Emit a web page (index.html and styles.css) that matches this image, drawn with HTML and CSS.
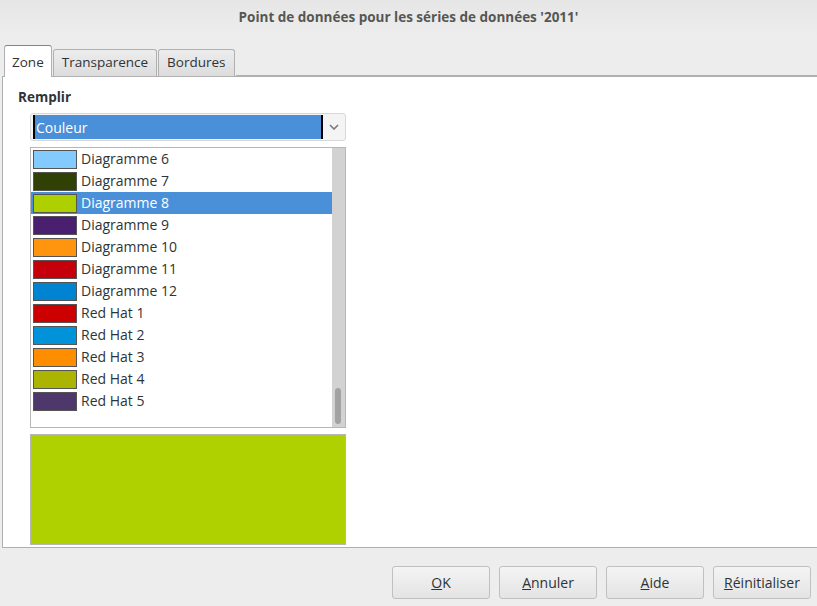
FILE: index.html
```html
<!DOCTYPE html>
<html lang="fr">
<head>
<meta charset="utf-8">
<link rel="stylesheet" href="styles.css">
</head>
<body>
<div class="window">
  <header class="titlebar">Point de données pour les séries de données '2011'</header>
  <nav class="tabs">
    <div class="tab active">Zone</div>
    <div class="tab">Transparence</div>
    <div class="tab">Bordures</div>
    <div class="tab-fill"></div>
  </nav>
  <main class="panel">
    <div class="label">Remplir</div>
    <div class="indent">
      <div class="combo">
        <div class="combo-value"><span class="caret"></span>Couleur</div>
        <div class="combo-btn">
          <svg width="10" height="6" viewBox="0 0 10 6"><path d="M1 1 L5 5 L9 1" fill="none" stroke="#7a7a7a" stroke-width="1.6"/></svg>
        </div>
      </div>
      <div class="list">
        <div class="rows">
          <div class="row"><span class="sw" style="background:#83caff"></span>Diagramme 6</div>
          <div class="row"><span class="sw" style="background:#314004"></span>Diagramme 7</div>
          <div class="row sel"><span class="sw" style="background:#aecf00"></span>Diagramme 8</div>
          <div class="row"><span class="sw" style="background:#4b1f6f"></span>Diagramme 9</div>
          <div class="row"><span class="sw" style="background:#ff950e"></span>Diagramme 10</div>
          <div class="row"><span class="sw" style="background:#c5000b"></span>Diagramme 11</div>
          <div class="row"><span class="sw" style="background:#0084d1"></span>Diagramme 12</div>
          <div class="row"><span class="sw" style="background:#cc0000"></span>Red Hat 1</div>
          <div class="row"><span class="sw" style="background:#0093d9"></span>Red Hat 2</div>
          <div class="row"><span class="sw" style="background:#ff8d00"></span>Red Hat 3</div>
          <div class="row"><span class="sw" style="background:#abb400"></span>Red Hat 4</div>
          <div class="row"><span class="sw" style="background:#4e376b"></span>Red Hat 5</div>
        </div>
        <div class="scroll"><div class="thumb"></div></div>
      </div>
      <div class="preview"></div>
    </div>
  </main>
  <footer class="buttons">
    <button class="btn"><u>O</u>K</button>
    <button class="btn"><u>A</u>nnuler</button>
    <button class="btn"><u>A</u>ide</button>
    <button class="btn"><u>R</u>éinitialiser</button>
  </footer>
</div>
</body>
</html>
```
FILE: styles.css
```css
html, body {
  margin: 0;
  padding: 0;
}
body {
  width: 817px;
  height: 606px;
  background: #ededed;
  font-family: "Open Sans", "Noto Sans", sans-serif;
  font-size: 13.5px;
  color: #2e3436;
  overflow: hidden;
}
.window {
  display: flex;
  flex-direction: column;
  height: 606px;
}
.titlebar {
  height: 36px;
  line-height: 34px;
  text-align: center;
  font-weight: bold;
  font-size: 13.5px;
  color: #555753;
  background: linear-gradient(#e6e6e6, #ededed);
}
.tabs {
  display: flex;
  align-items: flex-end;
  height: 40px;
  padding-left: 4px;
}
.tab {
  height: 26px;
  line-height: 25px;
  padding: 0 8px;
  border: 1px solid #b0b0b0;
  border-bottom: none;
  border-radius: 3px 3px 0 0;
  background: linear-gradient(#ededed, #dcdcdc);
  color: #2e3436;
  margin-right: 1px;
  box-sizing: content-box;
}
.tab.active {
  height: 31px;
  line-height: 33px;
  background: #fff;
  border-top: 1px solid #4a90d9;
  position: relative;
  top: 1px;
  padding: 0 7px;
  margin-right: 1px;
}
.tab-fill {
  flex: 1;
  border-bottom: 1px solid #b0b0b0;
  align-self: stretch;
}
.panel {
  background: #fff;
  border-left: 1px solid #b0b0b0;
  border-bottom: 1px solid #b0b0b0;
  border-top: 1px solid #b0b0b0;
  margin-left: 2px;
  height: 472px;
  padding-top: 10px;
  box-sizing: border-box;
}
.label {
  font-weight: bold;
  margin-left: 15px;
  height: 20px;
  line-height: 20px;
}
.indent {
  margin-left: 27px;
  width: 316px;
}
.combo {
  margin-top: 6px;
  display: flex;
  height: 28px;
  border: 1px solid #d8d8d8;
  border-radius: 3px;
  box-sizing: border-box;
  background: #f4f4f4;
}
.combo-value {
  flex: 1;
  background: #4a90d9;
  color: #fff;
  font-size: 14px;
  margin: 1px 0 1px 2px;
  display: flex;
  align-items: center;
  border-right: 2px solid #000;
}
.caret {
  width: 2px;
  align-self: stretch;
  background: #000;
  margin-right: 1px;
}
.combo-btn {
  width: 22px;
  display: flex;
  align-items: center;
  justify-content: center;
}
.list {
  margin-top: 6px;
  height: 281px;
  border: 1px solid #b6b6b6;
  box-sizing: border-box;
  display: flex;
  background: #fff;
}
.rows {
  flex: 1;
}
.row {
  height: 22px;
  line-height: 20px;
  display: flex;
  align-items: center;
  padding-left: 2px;
  color: #2e3436;
  font-size: 14px;
}
.row.sel {
  background: #4a90d9;
  color: #fff;
}
.sw {
  width: 42px;
  height: 17px;
  border: 1px solid #555;
  margin-right: 4px;
  flex: none;
}
.scroll {
  width: 13px;
  background: #d2d2d2;
  position: relative;
}
.thumb {
  position: absolute;
  left: 3px;
  width: 6px;
  top: 240px;
  height: 36px;
  border-radius: 3px;
  background: #a2a2a2;
}
.preview {
  margin-top: 6px;
  height: 111px;
  background: #b0d100;
  border: 1px solid #b6b6b6;
  box-sizing: border-box;
}
.buttons {
  display: flex;
  justify-content: flex-end;
  gap: 9px;
  padding: 18px 6px 0 0;
}
.btn {
  width: 98px;
  height: 33px;
  border: 1px solid #c0c0c0;
  border-radius: 3px;
  background: linear-gradient(#f4f4f4, #e4e4e4);
  font-family: inherit;
  font-size: 14px;
  color: #2e3436;
  padding: 0;
}
.btn u {
  text-decoration-thickness: 1px;
}
```
